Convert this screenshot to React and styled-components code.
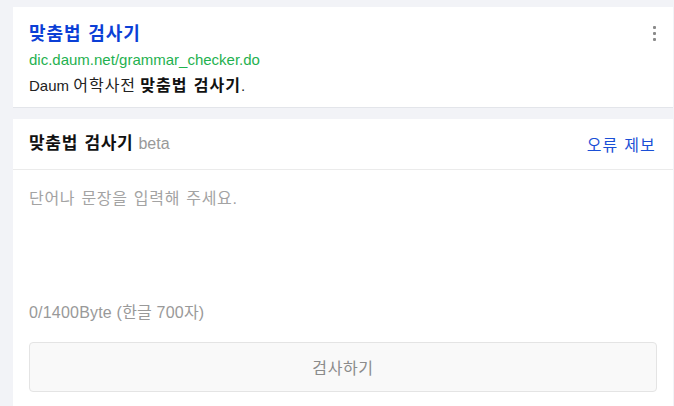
import React from "react";
import styled, { createGlobalStyle } from "styled-components";

const Global = createGlobalStyle`
  html, body { margin: 0; padding: 0; background: #f2f3f7; }
  body { font-family: "Liberation Sans", "Noto Sans CJK KR", sans-serif; }
  * { box-sizing: border-box; }
`;

const Page = styled.div`
  display: flex;
  flex-direction: column;
  gap: 12px;
  padding: 7px 1px 0 13px;
  width: 674px;
  height: 406px;
  overflow: hidden;
`;

const Card = styled.section`
  position: relative;
  background: #fff;
  box-shadow: 0 1px 0 #e3e5ea;
`;

const ResultCard = styled(Card)`
  padding: 15px 16px 0 16px;
  height: 100px;
`;

const Ko = styled.span`
  font-size: 16px;
  letter-spacing: 1px;
  word-spacing: 1px;
`;

const Title = styled.a`
  display: block;
  color: #0b3fd6;
  font-size: 18px;
  font-weight: 700;
  line-height: 24px;
  letter-spacing: 0.9px;
  word-spacing: 1px;
  text-decoration: none;
`;

const Url = styled.div`
  margin-top: 4px;
  color: #1fb14f;
  font-size: 15px;
  line-height: 20px;
`;

const Desc = styled.div`
  margin-top: 5px;
  color: #222;
  font-size: 15px;
  line-height: 22px;
  b { font-weight: 700; color: #111; }
`;

const More = styled.button`
  position: absolute;
  top: 19px;
  right: 17px;
  border: 0;
  background: none;
  padding: 0;
  display: flex;
  flex-direction: column;
  gap: 3px;
  span { width: 3px; height: 3px; background: #8a8a8a; display: block; border-radius: 1px; }
`;

const CheckerCard = styled(Card)`
  flex: 1;
  display: flex;
  flex-direction: column;
`;

const Header = styled.div`
  display: flex;
  align-items: center;
  justify-content: space-between;
  height: 51px;
  padding: 0 17px 0 16px;
  border-bottom: 1px solid #ebebeb;
`;

const HeadTitle = styled.h2`
  margin: 0;
  font-size: 17px;
  font-weight: 700;
  color: #111;
  line-height: 22px;
  letter-spacing: 0.7px;
  word-spacing: 1px;
  small { font-size: 16px; font-weight: 400; color: #999; margin-left: 5px; letter-spacing: 0; }
`;

const Report = styled.a`
  color: #1a4fd6;
  font-size: 16px;
  text-decoration: none;
  letter-spacing: 1.2px;
  word-spacing: 0px;
`;

const Body = styled.div`
  padding: 18px 16px 0 16px;
  display: flex;
  flex-direction: column;
`;

const Input = styled.textarea`
  border: 0;
  outline: none;
  resize: none;
  height: 114px;
  padding: 0;
  font-family: inherit;
  font-size: 16px;
  line-height: 22px;
  letter-spacing: 0.7px;
  word-spacing: 1px;
  color: #333;
  &::placeholder { color: #a3a3a3; }
`;

const Count = styled.div`
  font-size: 16px;
  color: #999;
  line-height: 22px;
  letter-spacing: 0.2px;
`;

const Submit = styled.button`
  margin-top: 18px;
  height: 50px;
  border: 1px solid #e4e4e4;
  border-radius: 4px;
  background: #f9f9f9;
  color: #8b8b8b;
  font-family: inherit;
  font-size: 16px;
  letter-spacing: 0.6px;
`;

export default function App() {
  return (
    <>
      <Global />
      <Page>
        <ResultCard>
          <Title href="#">맞춤법 검사기</Title>
          <Url>dic.daum.net/grammar_checker.do</Url>
          <Desc>
            Daum <Ko>어학사전</Ko> <b><Ko>맞춤법 검사기</Ko></b>.
          </Desc>
          <More aria-label="more"><span /><span /><span /></More>
        </ResultCard>
        <CheckerCard>
          <Header>
            <HeadTitle>맞춤법 검사기<small>beta</small></HeadTitle>
            <Report href="#">오류 제보</Report>
          </Header>
          <Body>
            <Input placeholder="단어나 문장을 입력해 주세요." />
            <Count>0/1400Byte (한글 700자)</Count>
            <Submit>검사하기</Submit>
          </Body>
        </CheckerCard>
      </Page>
    </>
  );
}
